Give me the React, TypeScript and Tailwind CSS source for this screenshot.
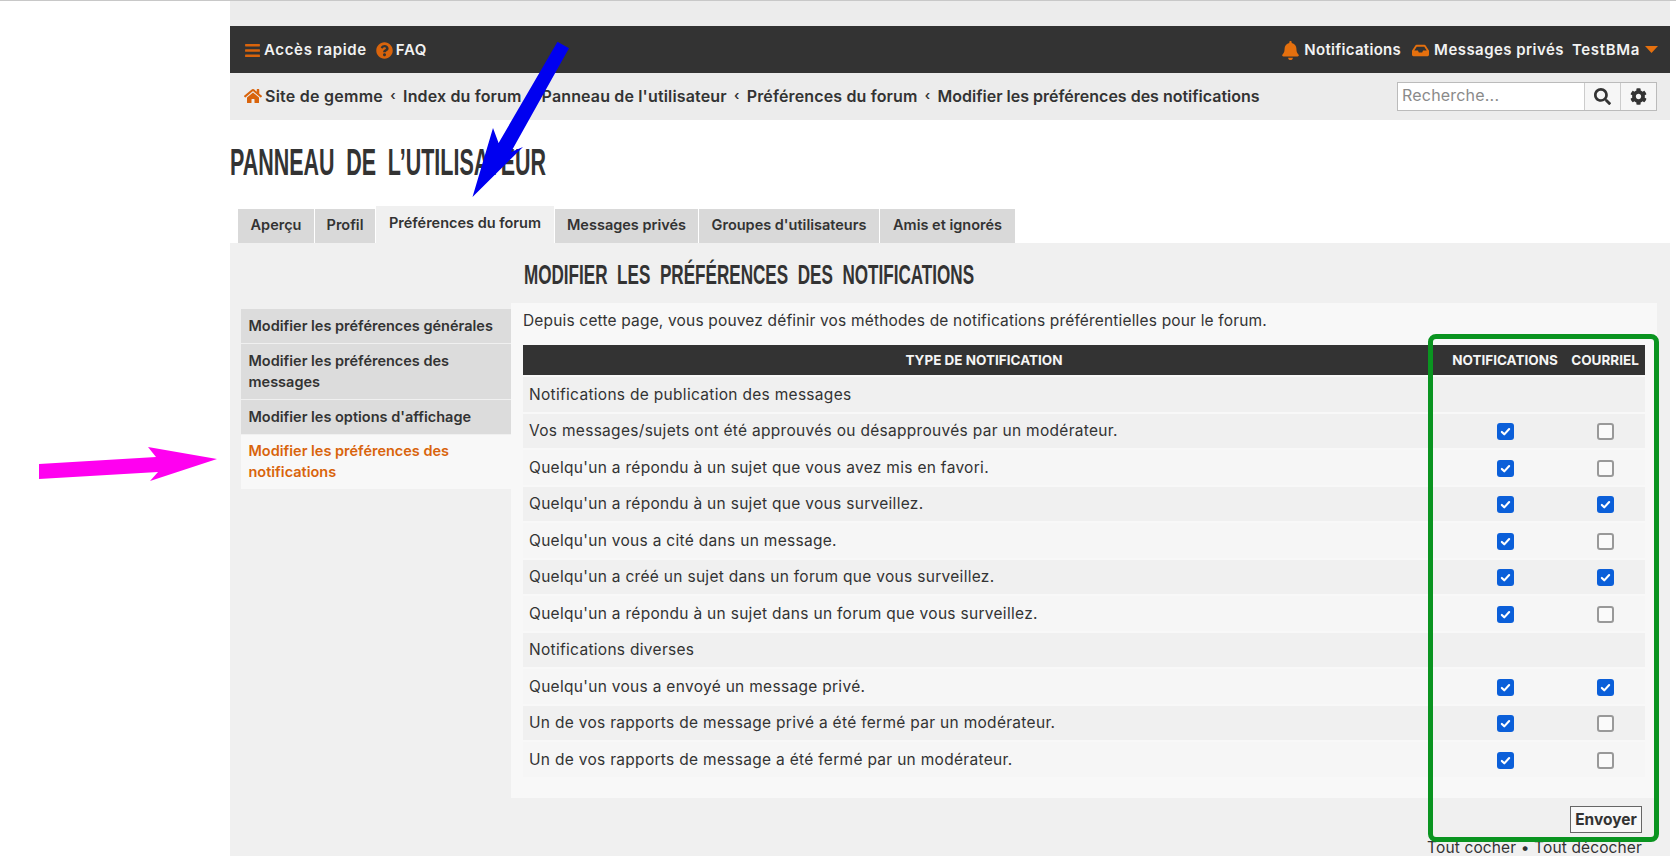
import React from "react";
import { FaBars, FaQuestionCircle, FaBell, FaInbox, FaHome, FaSearch, FaCog } from "react-icons/fa";

const rows: [string, boolean | null, boolean | null, boolean][] = [
  ["Notifications de publication des messages", null, null, true],
  ["Vos messages/sujets ont été approuvés ou désapprouvés par un modérateur.", true, false, true],
  ["Quelqu'un a répondu à un sujet que vous avez mis en favori.", true, false, false],
  ["Quelqu'un a répondu à un sujet que vous surveillez.", true, true, true],
  ["Quelqu'un vous a cité dans un message.", true, false, false],
  ["Quelqu'un a créé un sujet dans un forum que vous surveillez.", true, true, true],
  ["Quelqu'un a répondu à un sujet dans un forum que vous surveillez.", true, false, false],
  ["Notifications diverses", null, null, true],
  ["Quelqu'un vous a envoyé un message privé.", true, true, false],
  ["Un de vos rapports de message privé a été fermé par un modérateur.", true, false, true],
  ["Un de vos rapports de message a été fermé par un modérateur.", true, false, false],
];

const crumbs = ["Index du forum", "Panneau de l'utilisateur", "Préférences du forum"];

function Check({ on }: { on: boolean }) {
  if (on) {
    return (
      <span className="flex h-[17px] w-[17px] items-center justify-center rounded-[3px] bg-[#0b5fd9]">
        <svg viewBox="0 0 16 16" className="h-[13px] w-[13px]" fill="none" stroke="#fff" strokeWidth="2.6" strokeLinecap="round" strokeLinejoin="round">
          <path d="M3.5 8.5l3 3 6-6.5" />
        </svg>
      </span>
    );
  }
  return <span className="block h-[17px] w-[17px] rounded-[3px] border-2 border-[#999] bg-[#fafafa]" />;
}

function Tab({ w, label, active }: { w: string; label: string; active?: boolean }) {
  return (
    <div
      className={
        active
          ? `${w} flex h-[37px] items-center justify-center bg-[#f0f0f0] pb-[4px] text-[#333]`
          : `${w} flex h-[34px] items-center justify-center bg-[#d9d9d9] pb-[2px] text-[#333]`
      }
    >
      {label}
    </div>
  );
}

const side = ["Modifier les préférences générales", "Modifier les préférences des messages", "Modifier les options d'affichage"];

export default function App() {
  return (
    <div className="relative h-[856px] w-[1676px] overflow-hidden bg-white font-['Inter','Liberation_Sans',sans-serif] text-[#333]">
      <div className="h-px bg-[#c8c8c8]" />
      <div className="ml-[230px] w-[1440px]">
        <div className="h-[25px] bg-[#ececec]" />
        <nav className="flex h-[47px] items-center justify-between bg-[#333] pl-[14px] pr-[12px] pt-[1px] text-[15px] font-semibold tracking-[0.65px] text-[#f2f2f2]">
          <div className="flex items-center">
            <FaBars className="mr-[3px] text-[17px] text-[#d9640c]" />
            <span className="mr-[9px]">Accès rapide</span>
            <FaQuestionCircle className="mr-[3px] text-[17px] text-[#d9640c]" />
            <span>FAQ</span>
          </div>
          <div className="flex items-center tracking-[0.45px]">
            <FaBell className="mr-[4px] text-[19px] text-[#e5700e]" />
            <span className="mr-[11px] tracking-[0.3px]">Notifications</span>
            <FaInbox className="mr-[5px] text-[17px] text-[#e5700e]" />
            <span className="mr-[8px]">Messages privés</span>
            <span className="mr-[5px] tracking-[0.65px]">TestBMa</span>
            <svg width="13" height="7" viewBox="0 0 13 7" className="mb-[2px]">
              <polygon points="0,0 13,0 6.5,7" fill="#e5700e" />
            </svg>
          </div>
        </nav>
        <div className="flex h-[47px] items-center justify-between bg-[#ececec] pl-[14px] pr-[13px]">
          <div className="flex items-center pb-[1px] text-[16px] font-semibold tracking-[0.15px]">
            <FaHome className="mr-[3px] text-[18px] text-[#d9640c]" />
            <span className="tracking-[0.25px]">Site de gemme</span>
            {crumbs.map((c) => (
              <React.Fragment key={c}>
                <span className="w-[20px] text-center text-[13px]">‹</span>
                <span>{c}</span>
              </React.Fragment>
            ))}
            <span className="w-[20px] text-center text-[13px]">‹</span>
            <span className="tracking-[0px]">Modifier les préférences des notifications</span>
          </div>
          <div className="flex h-[29px] w-[260px] border border-[#bbb]">
            <div className="flex flex-1 items-center bg-white pb-[3px] pl-[4px] text-[16px] tracking-[0.2px] text-[#8a8a8a]">Recherche...</div>
            <div className="flex w-[36px] items-center justify-center border-l border-[#ccc] bg-[#f6f6f6] text-[17px] text-[#333]">
              <FaSearch />
            </div>
            <div className="flex w-[36px] items-center justify-center border-l border-[#ccc] bg-[#f6f6f6] text-[17px] text-[#333]">
              <FaCog />
            </div>
          </div>
        </div>

        <div className="h-[87px] pt-[23px]">
          <h1 className="origin-left scale-x-[0.58] whitespace-nowrap font-['Liberation_Sans_Narrow','Liberation_Sans',sans-serif] text-[37px] font-bold leading-[40px] text-[#333] [word-spacing:10px]">
            PANNEAU DE L’UTILISATEUR
          </h1>
        </div>

        <div className="flex h-[36px] items-end gap-px pl-[8px] text-[14.5px] font-semibold">
          <Tab w="w-[76px]" label="Aperçu" />
          <Tab w="w-[60px]" label="Profil" />
          <Tab w="w-[178px]" label="Préférences du forum" active />
          <Tab w="w-[143px]" label="Messages privés" />
          <Tab w="w-[180px]" label="Groupes d'utilisateurs" />
          <Tab w="w-[135px]" label="Amis et ignorés" />
        </div>

        <div className="h-[613px] bg-[#f0f0f0] pl-[11px] pr-[13px]">
          <div className="ml-[283px] flex h-[60px] items-center pt-[4px]">
            <h2 className="origin-left scale-x-[0.61] whitespace-nowrap font-['Liberation_Sans_Narrow','Liberation_Sans',sans-serif] text-[28px] font-bold text-[#333] [word-spacing:8px]">
              MODIFIER LES PRÉFÉRENCES DES NOTIFICATIONS
            </h2>
          </div>
          <div className="flex">
            <aside className="w-[270px] pt-[6px] text-[14.5px] font-semibold leading-[21px]">
              {side.map((s) => (
                <div key={s} className="mb-px bg-[#dcdcdc] pb-[7px] pl-[7.5px] pr-[6px] pt-[6px]">
                  {s}
                </div>
              ))}
              <div className="bg-[#f8f8f8] pb-[7px] pl-[7.5px] pr-[6px] pt-[5px] text-[#d9640c]">Modifier les préférences des notifications</div>
            </aside>
            <main className="h-[495px] flex-1 bg-[#f8f8f8] px-[12px]">
              <p className="flex h-[42px] items-center pb-[6px] text-[15.5px] tracking-[0.17px]">
                Depuis cette page, vous pouvez définir vos méthodes de notifications préférentielles pour le forum.
              </p>
              <div className="flex h-[30px] items-center bg-[#333] text-[13.5px] font-bold text-[#f5f5f5]">
                <div className="w-[922px] text-center">TYPE DE NOTIFICATION</div>
                <div className="w-[120px] text-center">NOTIFICATIONS</div>
                <div className="flex-1 text-center">COURRIEL</div>
              </div>
              <div className="pt-[2px]">
                {rows.map(([label, a, b, dark]) => (
                  <div
                    key={label}
                    className={`flex h-[36.5px] items-center border-b-2 border-[#f8f8f8] text-[15.5px] tracking-[0.3px] ${dark ? "bg-[#f0f0f0]" : "bg-[#f6f6f6]"}`}
                  >
                    <div className="w-[922px] pl-[6px]">{label}</div>
                    <div className="flex w-[120px] justify-center pt-[2px]">{a !== null && <Check on={a} />}</div>
                    <div className="flex flex-1 justify-center pt-[2px]">{b !== null && <Check on={b} />}</div>
                  </div>
                ))}
              </div>
            </main>
          </div>
          <div className="flex justify-end pr-[15px] pt-[8px]">
            <button className="h-[27px] w-[72px] border border-[#666] bg-[#f8f8f8] text-[15.5px] font-bold text-[#333]">Envoyer</button>
          </div>
          <div className="pr-[15px] pt-[7px] text-right text-[15.5px] leading-[16px] tracking-[0.13px]">Tout cocher • Tout décocher</div>
        </div>
      </div>

      <svg className="absolute left-0 top-0 pointer-events-none" width="1676" height="856">
        <polygon points="557.5,41.7 569,48.3 511,152 523,147 472.5,197 493,128 498.6,143" fill="#0000f0" />
        <polygon points="39,464 156,457 148,447 217,459 150,481 158,472 39,479" fill="#ff00f0" />
      </svg>
      <div className="pointer-events-none absolute left-[1428px] top-[334px] h-[508px] w-[231px] rounded-[8px] border-[5px] border-[#0a9420]" />
    </div>
  );
}
